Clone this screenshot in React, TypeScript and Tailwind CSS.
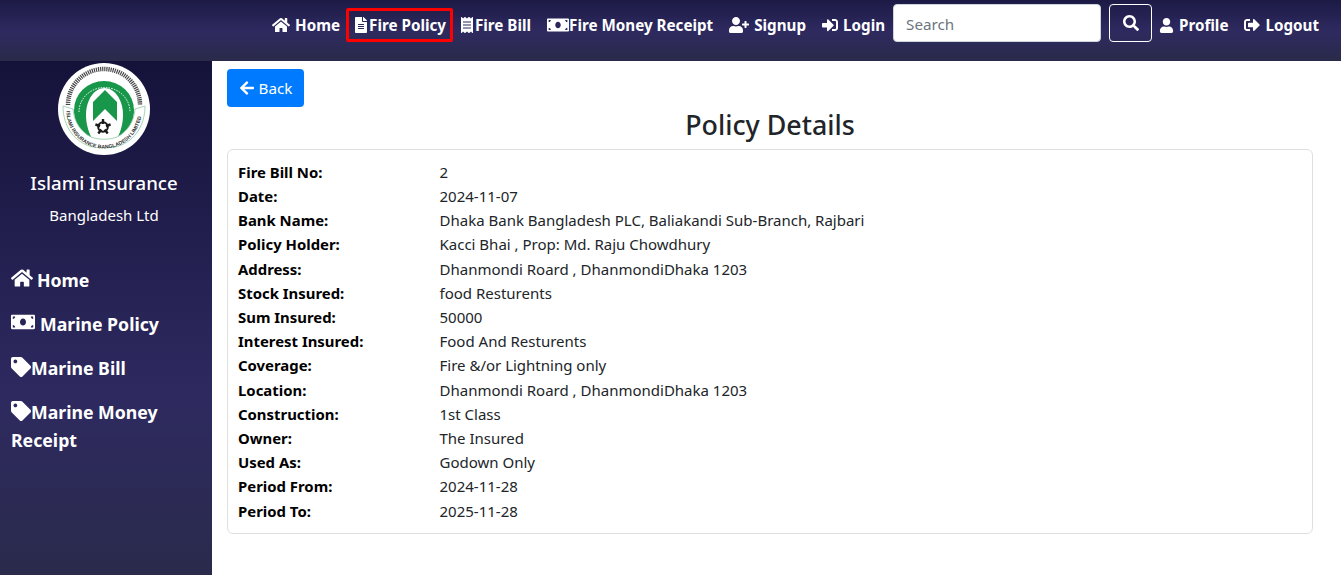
import { ReactNode } from "react";
import {
  FaArrowLeft,
  FaFileAlt,
  FaHome,
  FaMoneyBill,
  FaReceipt,
  FaSearch,
  FaSignInAlt,
  FaSignOutAlt,
  FaTag,
  FaUser,
  FaUserPlus,
} from "react-icons/fa";

const details = [
  ["Fire Bill No:", "2"],
  ["Date:", "2024-11-07"],
  ["Bank Name:", "Dhaka Bank Bangladesh PLC, Baliakandi Sub-Branch, Rajbari"],
  ["Policy Holder:", "Kacci Bhai , Prop: Md. Raju Chowdhury"],
  ["Address:", "Dhanmondi Roard , DhanmondiDhaka 1203"],
  ["Stock Insured:", "food Resturents"],
  ["Sum Insured:", "50000"],
  ["Interest Insured:", "Food And Resturents"],
  ["Coverage:", "Fire &/or Lightning only"],
  ["Location:", "Dhanmondi Roard , DhanmondiDhaka 1203"],
  ["Construction:", "1st Class"],
  ["Owner:", "The Insured"],
  ["Used As:", "Godown Only"],
  ["Period From:", "2024-11-28"],
  ["Period To:", "2025-11-28"],
];

function Logo() {
  return (
    <svg viewBox="0 0 92 92" className="h-[92px] w-[92px]">
      <circle cx="46" cy="46" r="46" fill="#ffffff" />
      {/* script ring on top */}
      <path d="M10 42a36 36 0 0 1 72 0" fill="none" stroke="#444" strokeWidth="4.5" strokeDasharray="1.2 0.9" />
      {/* green arch */}
      <path d="M16 47a30 29 0 0 1 60 0c0 9-3 17-9 24l-4 4H29l-4-4c-6-7-9-15-9-24z" fill="#18964a" />
      <path d="M21 49a25.500 24.500 0 0 1 51 0" fill="none" stroke="#ffffff" strokeWidth="1" strokeDasharray="1.5 1.2" />
      <path d="M28 52C28 36 37 25 46.500 25S65 36 65 52c0 10-3 18-7 26H35c-4-8-7-16-7-26z" fill="#ffffff" />
      <path d="M35 58V39l12-12 12 12v19L47 46z" fill="#18964a" />
      {/* gear */}
      <circle cx="45" cy="64" r="4.800" fill="#ffffff" stroke="#1a1a1a" strokeWidth="2" />
      <path
        d="M45 56v5M37.400 61.500l4.700 1.500M40.300 70.500l3-4M49.700 70.500l-3-4M52.600 61.500l-4.700 1.500"
        fill="none"
        stroke="#1a1a1a"
        strokeWidth="2.400"
      />
      {/* banner */}
      <path
        d="M5 43l10 3c1 13 8 23 18 28 8 3 18 3 26 0 10-5 17-15 18-28l10-3c0 21-12 37-30 41-7 1-15 1-22 0C17 80 5 64 5 43z"
        fill="#ffffff"
        stroke="#8fc9a5"
        strokeWidth="0.8"
      />
      <path id="logo-bottom" d="M8.500 48a37.500 37.500 0 0 0 75 0" fill="none" />
      <text fontSize="5.2" fontWeight="700" fill="#333" fontFamily="Liberation Sans, sans-serif">
        <textPath href="#logo-bottom" textLength="112">
          ISLAMI INSURANCE BANGLADESH LIMITED
        </textPath>
      </text>
    </svg>
  );
}

function SideLink({ icon, label }: { icon: ReactNode; label: string }) {
  return (
    <a className="block py-[8px] text-[17.7px] font-bold leading-[28px] text-white">
      {icon}
      {label}
    </a>
  );
}

const navLink = "flex h-[34px] items-center whitespace-nowrap text-white";

export default function App() {
  return (
    <div className="flex h-[575px] w-[1341px] flex-col overflow-hidden bg-white font-['Noto_Sans',sans-serif] text-black">
      <header className="flex h-[61px] shrink-0 items-start justify-end bg-gradient-to-b from-[#1c1a45] via-[#2e2a60] via-50% to-[#2a2a4a] pr-[14px] pt-[8px] text-[15.2px] font-bold">
        <div className="flex items-center">
          <a className={`${navLink} pl-2 pr-[6px]`}>
            <FaHome className="mr-[5px] text-[18px]" />
            Home
          </a>
          <a className="flex h-[34px] items-center whitespace-nowrap rounded-[2px] border-[3px] border-[#ff0000] px-[4px] text-white">
            <FaFileAlt className="text-[16px]" />
            Fire Policy
          </a>
          <a className={`${navLink} pl-[6px] pr-2`}>
            <FaReceipt className="text-[16px]" />
            Fire Bill
          </a>
          <a className={`${navLink} px-2`}>
            <FaMoneyBill className="text-[22px]" />
            Fire Money Receipt
          </a>
          <a className={`${navLink} px-2`}>
            <FaUserPlus className="mr-[5px] text-[20px]" />
            Signup
          </a>
          <a className={`${navLink} px-2`}>
            <FaSignInAlt className="mr-[5px] text-[16px]" />
            Login
          </a>
        </div>
        <div className="-mt-[4px] flex items-center">
          <input
            placeholder="Search"
            className="h-[38px] w-[208px] rounded-[4px] border border-[#ced4da] bg-white px-3 pt-px text-[15.2px] font-normal text-black outline-none placeholder:text-[#6c757d]"
          />
          <button className="ml-2 flex h-[38px] w-[43px] items-center justify-center rounded-[4px] border border-white text-white">
            <FaSearch className="text-[16px]" />
          </button>
        </div>
        <div className="flex items-center">
          <a className={`${navLink} pl-[7px] pr-2`}>
            <FaUser className="mr-[5px] text-[15px]" />
            Profile
          </a>
          <a className={`${navLink} px-2`}>
            <FaSignOutAlt className="mr-[5px] text-[16px]" />
            Logout
          </a>
        </div>
      </header>

      <div className="flex flex-1">
        <aside className="w-[212px] shrink-0 bg-gradient-to-b from-[#15123a] via-[#2e2a60] via-65% to-[#2a2a4c] pl-[11px] pt-[2px]">
          <div className="flex flex-col items-center pr-[15px]">
            <Logo />
            <div className="mt-[13px] text-[18.6px] font-medium leading-[30px] text-white">Islami Insurance</div>
            <div className="mt-[5px] text-[15px] leading-[24px] text-white">Bangladesh Ltd</div>
          </div>
          <nav className="mt-[31px]">
            <SideLink icon={<FaHome className="mr-[4px] inline align-[-2px] text-[22px]" />} label="Home" />
            <SideLink icon={<FaMoneyBill className="mr-[5px] inline align-[-3px] text-[24px]" />} label="Marine Policy" />
            <SideLink icon={<FaTag className="inline align-[-2px] text-[20px]" />} label="Marine Bill" />
            <SideLink icon={<FaTag className="inline align-[-2px] text-[20px]" />} label="Marine Money Receipt" />
          </nav>
        </aside>

        <main className="flex-1 pl-[15px] pr-[28px] pt-[8px]">
          <button className="flex h-[38px] w-[77px] items-center justify-center rounded-[4px] bg-[#007bff] text-[15.2px] text-white">
            <FaArrowLeft className="mr-[4px] text-[16px]" />
            Back
          </button>
          <h2 className="mt-px text-center text-[26.8px] font-medium leading-[34px] text-[#212529]">Policy Details</h2>
          <div className="mt-[7px] rounded-[6px] border border-[#dfdfdf] px-[10px] pb-[10px] pt-[9.8px]">
            {details.map(([label, value]) => (
              <div key={label} className="flex text-[15px] leading-[24.2px] text-[#212529]">
                <div className="w-[201.5px] shrink-0 text-[14.9px] font-bold text-black">{label}</div>
                <div>{value}</div>
              </div>
            ))}
          </div>
        </main>
      </div>
    </div>
  );
}
